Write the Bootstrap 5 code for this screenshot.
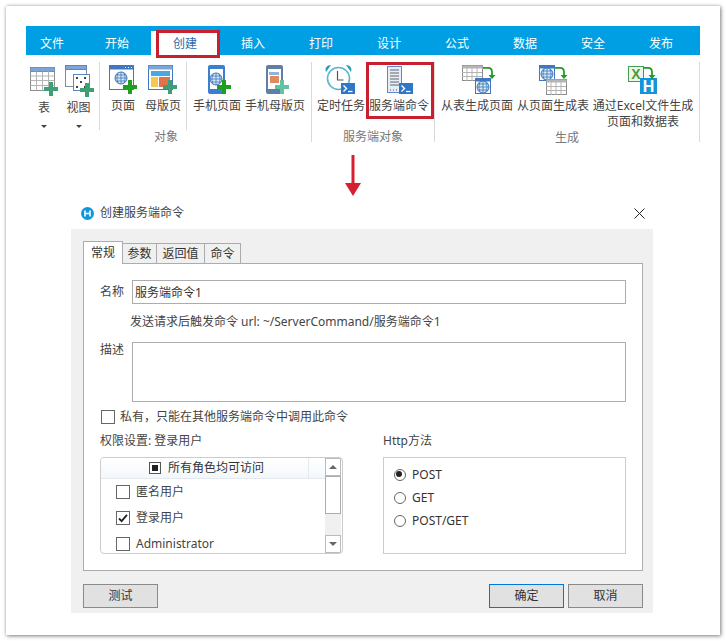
<!DOCTYPE html>
<html lang="zh-CN">
<head>
<meta charset="utf-8">
<title>创建服务端命令</title>
<link href="https://cdn.jsdelivr.net/npm/bootstrap@5.3.0/dist/css/bootstrap.min.css" rel="stylesheet">
<style>
html,body{margin:0;background:#fff;}
body{width:726px;height:641px;overflow:hidden;font-family:"Noto Sans","Noto Sans CJK SC",sans-serif;font-size:12px;line-height:16px;color:#333;}
.sheet{position:relative;margin:6px 0 0 6px;width:714px;height:629px;padding:20px;background:#fff;box-shadow:1px 1px 4px rgba(0,0,0,.45),0 0 3px rgba(0,0,0,.18);}
.topbar{width:674px;height:29px;background:#009fe3;align-items:flex-end;}
.toptab{width:68px;height:29px;color:#fff;line-height:36px;text-align:center;font-size:12px;}
.toptab.first{width:52px;}
.toptab.second{width:73px;padding-left:5px;}
.toptab.on{background:#fff;color:#2a6aa8;height:24px;line-height:26px;}
.redmark{position:absolute;border:3px solid #c8202f;pointer-events:none;}
.redmark.one{left:150px;top:24px;width:64px;height:28px;}
.redmark.two{left:360px;top:56px;width:68px;height:57px;}
.ribbon{height:90px;width:674px;}
.rgroup{height:90px;}
.g1{width:73px}.g2{width:86px}.g3{width:124px}.g4{width:122px}.g5{width:264px}
.rsep{width:1px;background:#d9d9d9;margin-top:7px;align-self:flex-start;}
.rsep.short{height:68px}.rsep.tall{height:80px}
.ritem{padding-top:5px;color:#444;white-space:nowrap;}
.ritem svg{display:block;}
.w36{width:36px}.w33{width:33px}.w46{width:46px}.w34{width:34px}.w60{width:60px}.w56{width:56px}.w58{width:58px}.w84{width:84px}.w68{width:68px}.w112{width:112px;text-align:center;}
.drop{margin-top:2px;}
.caret-dn{width:0;height:0;border:3px solid transparent;border-top:3px solid #444;margin-top:9px;}
.glabel{margin-top:auto;height:16px;line-height:16px;text-align:center;color:#777;}
.glabel.shift{padding-left:46px;}
.arrowbox{display:block;margin:5px 0 3px 319px;}
.dialog{margin-left:45px;width:582px;}
.dtitle{height:26px;padding:0 8px 6px 10px;}
.dtitle span{margin-left:6px;color:#444;}
.dpanel{background:#f0f0f0;height:384px;padding:12px 10px 0 12px;}
.nav.dtabs{height:22px;align-items:flex-end;flex-wrap:nowrap;border:0;}
.dtabs .nav-link{height:20px;padding:0;border:1px solid #acacac;border-bottom:0;border-radius:0;margin:0 -1px 0 0;background:#f0f0f0;color:#333;font-size:12px;line-height:20px;text-align:center;}
.dtabs .nav-link.active{height:23px;background:#fff;color:#333;border-color:#acacac;position:relative;z-index:2;margin-bottom:-1px;line-height:21px;}
.t39{width:40px}.t35{width:35px}.t49{width:49px}.t37{width:37px}
.dbody{height:308px;background:#fff;border:1px solid #acacac;padding:16px 16px 0;}
.flabel{width:32px;flex:none;color:#444;}
.finput{width:494px;height:24px;border:1px solid #acacac;border-radius:0;padding:0 2px;font-size:12px;line-height:22px;color:#333;font-family:inherit;background:#fff;}
textarea.finput{height:60px;resize:none;display:block;}
.urltext{margin:10px 0 0 30px;color:#444;}
.descrow{margin-top:12px;}
.chkrow{margin-top:8px;height:14px;line-height:14px;padding-left:1px;}
.chkrow label{margin-left:5px;color:#444;}
.form-check-input.wch{width:14px;height:14px;margin:0;flex:none;border:1px solid #666;border-radius:0;background-color:#fff;box-shadow:none;}
.form-check-input.wch:checked{background-color:#fff;border-color:#666;background-size:12px;background-image:url("data:image/svg+xml,%3Csvg xmlns='http://www.w3.org/2000/svg' viewBox='0 0 12 12'%3E%3Cpath d='M2 6.5l2.6 2.6L10 2.8' fill='none' stroke='%23222' stroke-width='1.8'/%3E%3C/svg%3E");}
.form-check-input.wra{width:12px;height:12px;margin:0;flex:none;border:1px solid #666;background-color:#fff;box-shadow:none;}
.form-check-input.wra:checked{background-color:#fff;border-color:#666;background-size:12px;background-image:url("data:image/svg+xml,%3Csvg xmlns='http://www.w3.org/2000/svg' viewBox='0 0 12 12'%3E%3Ccircle cx='5' cy='5' r='3' fill='%23222'/%3E%3C/svg%3E");}
.colhead{margin-top:9px;color:#444;}
.cols{gap:40px;}
.colw{width:243px;}
.boxed{height:97px;margin-top:8px;border:1px solid #ccc;background:#fff;overflow:hidden;}
.listarea{width:224px;height:95px;overflow:hidden;}
.lhead-wrap{border-bottom:1px solid #e4e9ef;height:21px;background:linear-gradient(#fff,#f4f7fa);}
.lhead{height:20px;border-right:1px solid #e4e9ef;width:208px;padding-left:48px;}
.squarechk{width:12px;height:12px;border:1px solid #555;background:#fff;padding:2px;margin-right:7px;flex:none;}
.squarechk i{display:block;width:6px;height:6px;background:#222;}
.lrow{height:26px;padding-left:15px;color:#444;}
.lrow label{margin-left:6px;}
.sbar{width:16px;height:95px;background:#f0f0f0;}
.sbtn{height:18px;background:#fff;border:1px solid #bbb;}
.sthumb{height:38px;background:#fff;border:1px solid #acacac;}
.up-tri{width:0;height:0;border:4px solid transparent;border-top:0;border-bottom:4px solid #666;}
.dn-tri{width:0;height:0;border:4px solid transparent;border-bottom:0;border-top:4px solid #666;}
.radiobox{padding-top:5px;}
.rrow{height:23px;padding-left:10px;color:#333;}
.rrow label{margin-left:6px;}
.dfoot{margin-top:13px;}
.btn.wbtn{width:75px;height:24px;padding:0;border:1px solid #8a8a8a;border-radius:0;background:#e1e1e1;color:#333;font-size:12px;line-height:22px;}
.btn.wbtn.def{border-color:#0078d7;margin-right:4px;}
.svgdefs{position:absolute;}
</style>
</head>
<body>
<svg width="0" height="0" class="svgdefs">
  <defs>
    <g id="grid22"><rect x="0" y="0" width="24" height="23" fill="#fff" stroke="#8c8c8c"/><rect x="0" y="0" width="24" height="4" fill="#7ca6d8" stroke="#6d90bf"/><path d="M0 8.500h24M0 13h24M0 18h24M6 4v19M12 4v19M18 4v19" stroke="#b5b5b5" fill="none"/></g>
    <g id="globe"><circle cx="0" cy="0" r="6" fill="#d5e7f7" stroke="#3f78b8"/><path d="M-6 0h12M0-6v12M-5-3h10M-5 3h10M-2.500-5.500c-2 3-2 8 0 11M2.500-5.500c2 3 2 8 0 11" fill="none" stroke="#3f78b8" stroke-width=".8"/></g>
    <g id="term"><rect x="0" y="0" width="14" height="11" fill="#2f76c9"/><path d="M2.500 2.500l3 3-3 3" fill="none" stroke="#fff" stroke-width="1.400"/><path d="M7 8.500h4.500" stroke="#fff" stroke-width="1.300"/></g>
    <g id="plusg"><path d="M5 0h4v5h5v4H9v5H5V9H0V5h5z" fill="#1f9e1f"/></g>
    <g id="plusd"><path d="M5 0h4v5h5v4H9v5H5V9H0V5h5z" fill="#3f9f74"/></g>
    <g id="plusl"><path d="M5 0h4v5h5v4H9v5H5V9H0V5h5z" fill="#63c2a4"/></g>
    <g id="garrow"><path d="M0 .800h5c2.500 0 4 1.600 4 4V9" fill="none" stroke="#1f9e1f" stroke-width="1.800"/><path d="M5.500 8h7l-3.500 4z" fill="#1f9e1f"/></g>
  </defs>
</svg>
<main class="sheet">
  <div class="redmark one"></div>
  <div class="redmark two"></div>
  <div class="topbar d-flex">
    <div class="toptab first">文件</div>
    <div class="toptab second">开始</div>
    <div class="toptab on">创建</div>
    <div class="toptab">插入</div>
    <div class="toptab">打印</div>
    <div class="toptab">设计</div>
    <div class="toptab">公式</div>
    <div class="toptab">数据</div>
    <div class="toptab">安全</div>
    <div class="toptab">发布</div>
  </div>
  <div class="ribbon d-flex">
    <section class="rgroup g1 d-flex">
      <div class="ritem w36 d-flex flex-column align-items-center">
        <svg width="44" height="38" viewBox="22 60 44 38"><use href="#grid22" x="30.500" y="67.500"/><use href="#plusd" x="44" y="82"/></svg>
        <span class="drop">表</span><i class="caret-dn"></i>
      </div>
      <div class="ritem w33 d-flex flex-column align-items-center">
        <svg width="44" height="38" viewBox="56 60 44 38"><rect x="64.500" y="65.500" width="21" height="21" fill="#fff" stroke="#7e8c9e"/><rect x="64.500" y="65.500" width="21" height="4" fill="#7ca6d8" stroke="#5d86bd"/><rect x="72.500" y="74.500" width="16" height="16" fill="#fff" stroke="#5a86c4"/><path d="M75 78h2M83 78h2M75 87h2M83 87h2M79 82h2" stroke="#444" stroke-width="2"/><use href="#plusd" x="79" y="83"/></svg>
        <span class="drop">视图</span><i class="caret-dn"></i>
      </div>
    </section>
    <div class="rsep short"></div>
    <section class="rgroup g2 d-flex flex-column">
      <div class="d-flex">
        <div class="ritem w46 d-flex flex-column align-items-center">
          <svg width="44" height="38" viewBox="101 60 44 38"><rect x="109.500" y="65.500" width="24" height="24" fill="#fff" stroke="#3f78c0"/><rect x="109.500" y="65.500" width="24" height="4" fill="#3f78c0"/><path d="M125 67.500h1M128 67.500h1M131 67.500h1" stroke="#fff"/><use href="#globe" x="121" y="78"/><use href="#plusg" x="123" y="80"/></svg>
          <span>页面</span>
        </div>
        <div class="ritem w34 d-flex flex-column align-items-center">
          <svg width="44" height="38" viewBox="141 60 44 38"><rect x="148.500" y="65.500" width="24" height="24" fill="#fff" stroke="#3f78c0"/><rect x="148.500" y="65.500" width="24" height="4" fill="#7ca6d8"/><rect x="151" y="71" width="19" height="5" fill="#4aa8e0"/><rect x="151" y="77" width="7" height="10" fill="#f5c84f"/><rect x="159" y="77" width="11" height="10" fill="#e0734f"/><use href="#plusd" x="163" y="80"/></svg>
          <span>母版页</span>
        </div>
      </div>
      <div class="glabel shift">对象</div>
    </section>
    <div class="rsep short"></div>
    <section class="rgroup g3 d-flex">
      <div class="ritem w60 d-flex flex-column align-items-center">
        <svg width="44" height="38" viewBox="195 60 44 38"><rect x="208" y="65" width="17" height="29" rx="2" fill="#3a7fd0"/><rect x="210" y="69" width="13" height="20" fill="#fff"/><use href="#globe" x="216" y="79"/><use href="#plusg" x="217" y="80"/></svg>
        <span>手机页面</span>
      </div>
      <div class="ritem w56 d-flex flex-column align-items-center">
        <svg width="44" height="38" viewBox="253 60 44 38"><rect x="266" y="65" width="17" height="29" rx="2" fill="#5f7fa8"/><rect x="268" y="69" width="13" height="20" fill="#fff"/><rect x="269" y="72" width="10" height="3" fill="#8fb5dd"/><rect x="270" y="76" width="9" height="7" fill="#e08a5f"/><use href="#plusl" x="275" y="80"/></svg>
        <span>手机母版页</span>
      </div>
    </section>
    <div class="rsep tall"></div>
    <section class="rgroup g4 d-flex flex-column">
      <div class="d-flex">
        <div class="ritem w58 d-flex flex-column align-items-center">
          <svg width="44" height="38" viewBox="319 60 44 38"><path d="M326 72c-1.500-4 1-7 5-7zM351 72c1.500-4-1-7-5-7z" fill="#1e9fb8"/><circle cx="338.500" cy="78.500" r="11" fill="#fff" stroke="#5fb4cc" stroke-width="1.600"/><path d="M337.500 71v9h6" fill="none" stroke="#555" stroke-width="1.200"/><use href="#term" x="341" y="83"/></svg>
          <span>定时任务</span>
        </div>
        <div class="ritem w58 d-flex flex-column align-items-center">
          <svg width="44" height="38" viewBox="377 60 44 38"><rect x="387.500" y="66.500" width="14" height="26" fill="#e4edf8" stroke="#5a8ac8"/><path d="M390 70h9M390 73h9M390 76h9M390 79h9M390 82h9M390 85h9" stroke="#666"/><path d="M390 90h1M393 90h1M396 90h1" stroke="#555"/><use href="#term" x="399" y="83"/></svg>
          <span>服务端命令</span>
        </div>
      </div>
      <div class="glabel">服务端对象</div>
    </section>
    <div class="rsep tall"></div>
    <section class="rgroup g5 d-flex flex-column">
      <div class="d-flex">
        <div class="ritem w84 d-flex flex-column align-items-center">
          <svg width="44" height="38" viewBox="455 60 44 38"><rect x="462.500" y="65.500" width="20" height="15" fill="#fff" stroke="#8c8c8c"/><rect x="462.500" y="65.500" width="20" height="3" fill="#b5b5b5"/><path d="M462 72.500h20M462 76.500h20M467 68v13M472 68v13M477 68v13" stroke="#b5b5b5"/><rect x="475.500" y="78.500" width="15" height="15" fill="#fff" stroke="#3f78c0"/><rect x="475.500" y="78.500" width="15" height="3" fill="#3f78c0"/><use href="#globe" x="483" y="87"/><use href="#garrow" x="483" y="67"/></svg>
          <span>从表生成页面</span>
        </div>
        <div class="ritem w68 d-flex flex-column align-items-center">
          <svg width="44" height="38" viewBox="531 60 44 38"><rect x="539.500" y="65.500" width="15" height="15" fill="#fff" stroke="#3f78c0"/><rect x="539.500" y="65.500" width="15" height="3" fill="#3f78c0"/><use href="#globe" x="547" y="74"/><rect x="546.500" y="79.500" width="20" height="15" fill="#fff" stroke="#8c8c8c"/><rect x="546.500" y="79.500" width="20" height="3" fill="#b5b5b5"/><path d="M546 86.500h20M546 90.500h20M551 82v13M556 82v13M561 82v13" stroke="#b5b5b5"/><use href="#garrow" x="555" y="67"/></svg>
          <span>从页面生成表</span>
        </div>
        <div class="ritem w112 d-flex flex-column align-items-center">
          <svg width="44" height="38" viewBox="621 60 44 38"><rect x="628.500" y="66.500" width="15" height="15" fill="#eef6ea" stroke="#3f9f50"/><text x="636" y="79" font-family="Liberation Sans" font-weight="700" font-size="14" text-anchor="middle" fill="#4a9a3f">X</text><rect x="640" y="78" width="17" height="16" fill="#1296db"/><text x="648.500" y="92" font-family="Liberation Sans" font-weight="700" font-size="16" text-anchor="middle" fill="#fff">H</text><use href="#garrow" x="643" y="67"/></svg>
          <span>通过Excel文件生成<br>页面和数据表</span>
        </div>
      </div>
      <div class="glabel">生成</div>
    </section>
    <div class="rsep tall"></div>
  </div>
  <svg class="arrowbox" width="16" height="50" viewBox="0 0 16 50"><path d="M6.500 5h3v31h-3z" fill="#d5202f"/><path d="M0 33h16l-8 13z" fill="#d5202f"/></svg>
  <div class="dialog">
    <div class="dtitle d-flex align-items-center">
      <svg width="13" height="13" viewBox="0 0 13 13"><circle cx="6.500" cy="6.500" r="6.500" fill="#1296db"/><path d="M4 3.500v6M9 3.500v6M4 6.500h5" stroke="#fff" stroke-width="1.600" fill="none"/></svg>
      <span>创建服务端命令</span>
      <svg class="ms-auto" width="11" height="11" viewBox="0 0 11 11"><path d="M.5.500l10 10M10.500.500l-10 10" stroke="#222" fill="none"/></svg>
    </div>
    <div class="dpanel">
      <ul class="nav dtabs">
        <li class="nav-item"><a class="nav-link active t39" href="#">常规</a></li>
        <li class="nav-item"><a class="nav-link t35" href="#">参数</a></li>
        <li class="nav-item"><a class="nav-link t49" href="#">返回值</a></li>
        <li class="nav-item"><a class="nav-link t37" href="#">命令</a></li>
      </ul>
      <div class="dbody">
        <div class="d-flex align-items-center">
          <label class="flabel">名称</label>
          <input class="finput" type="text" value="服务端命令1">
        </div>
        <div class="urltext">发送请求后触发命令 url: ~/ServerCommand/服务端命令1</div>
        <div class="descrow d-flex align-items-start">
          <label class="flabel">描述</label>
          <textarea class="finput"></textarea>
        </div>
        <div class="chkrow d-flex align-items-center">
          <input class="form-check-input wch" type="checkbox">
          <label>私有，只能在其他服务端命令中调用此命令</label>
        </div>
        <div class="cols d-flex">
          <div class="colw">
            <div class="colhead">权限设置: 登录用户</div>
            <div class="boxed d-flex rounded-1">
              <div class="listarea">
                <div class="lhead-wrap">
                  <div class="lhead d-flex align-items-center"><span class="squarechk"><i></i></span>所有角色均可访问</div>
                </div>
                <div class="lrow d-flex align-items-center"><input class="form-check-input wch" type="checkbox"><label>匿名用户</label></div>
                <div class="lrow d-flex align-items-center"><input class="form-check-input wch" type="checkbox" checked><label>登录用户</label></div>
                <div class="lrow d-flex align-items-center"><input class="form-check-input wch" type="checkbox"><label>Administrator</label></div>
              </div>
              <div class="sbar d-flex flex-column">
                <div class="sbtn d-flex align-items-center justify-content-center"><i class="up-tri"></i></div>
                <div class="sthumb"></div>
                <div class="sbtn mt-auto d-flex align-items-center justify-content-center"><i class="dn-tri"></i></div>
              </div>
            </div>
          </div>
          <div class="colw">
            <div class="colhead">Http方法</div>
            <div class="boxed radiobox">
              <div class="rrow d-flex align-items-center"><input class="form-check-input wra" type="radio" name="hm" checked><label>POST</label></div>
              <div class="rrow d-flex align-items-center"><input class="form-check-input wra" type="radio" name="hm"><label>GET</label></div>
              <div class="rrow d-flex align-items-center"><input class="form-check-input wra" type="radio" name="hm"><label>POST/GET</label></div>
            </div>
          </div>
        </div>
      </div>
      <div class="dfoot d-flex">
        <button type="button" class="btn wbtn">测试</button>
        <button type="button" class="btn wbtn def ms-auto">确定</button>
        <button type="button" class="btn wbtn">取消</button>
      </div>
    </div>
  </div>
</main>
<script src="https://cdn.jsdelivr.net/npm/bootstrap@5.3.0/dist/js/bootstrap.bundle.min.js"></script>
</body>
</html>
